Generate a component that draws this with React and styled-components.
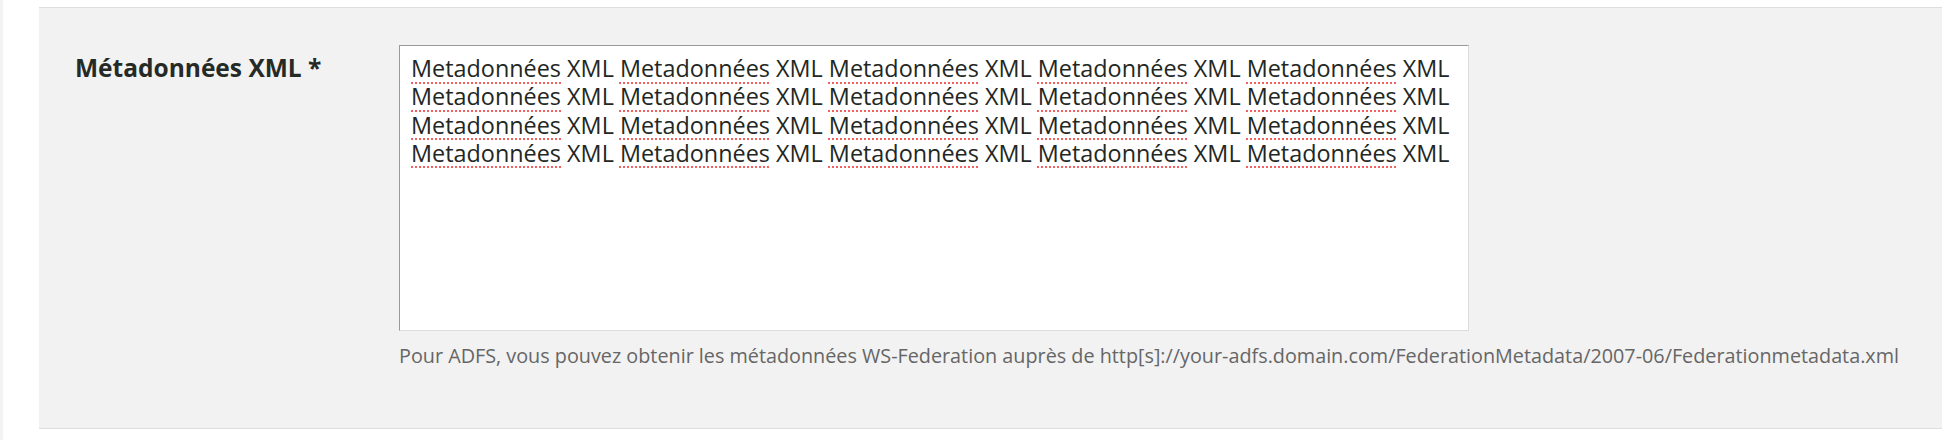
import React from "react";
import styled, { createGlobalStyle } from "styled-components";

const Global = createGlobalStyle`
  html, body { margin: 0; padding: 0; background: #ffffff; }
  body { font-family: "Open Sans", "Noto Sans", sans-serif; }
`;

const Page = styled.div`
  display: flex;
  height: 440px;
  box-sizing: border-box;
  border-left: 3px solid #f3f3f3;
  padding: 7px 0 0 36px;
`;

const Panel = styled.section`
  flex: 1;
  align-self: flex-start;
  box-sizing: border-box;
  height: 422px;
  background: #f2f2f2;
  border-top: 1px solid #dedede;
  border-bottom: 1px solid #dedede;
  padding: 37px 0 0 36px;
  display: grid;
  grid-template-columns: 324px 1fr;
  align-items: start;
`;

const Label = styled.label`
  font-size: 24.5px;
  font-weight: 700;
  line-height: 28px;
  color: #262a27;
  margin-top: 9px;
`;

const Field = styled.div`
  display: flex;
  flex-direction: column;
  align-items: flex-start;
`;

const TextBox = styled.div`
  width: 1070px;
  height: 286px;
  box-sizing: border-box;
  background: #ffffff;
  border-style: solid;
  border-width: 1px;
  border-color: #9a9a9a #dcdcdc #dcdcdc #9a9a9a;
  padding: 8px 11px 6px;
  font-size: 23.4px;
  line-height: 28.3px;
  color: #232723;
  overflow: hidden;
`;

const Misspelled = styled.span`
  text-decoration: underline dotted #f26060;
  text-decoration-thickness: 2px;
  text-underline-offset: 5px;
`;

const Help = styled.p`
  margin: 11px 0 0;
  font-size: 19.8px;
  line-height: 28px;
  color: #666666;
  white-space: nowrap;
`;

const Line = styled.div``;

export default function App() {
  const lines = [0, 1, 2, 3];
  const words = [0, 1, 2, 3, 4];
  return (
    <>
      <Global />
      <Page>
        <Panel>
          <Label htmlFor="xml">Métadonnées XML *</Label>
          <Field>
            <TextBox id="xml" role="textbox" aria-multiline="true">
              {lines.map((l) => (
                <Line key={l}>
                  {words.map((w) => (
                    <React.Fragment key={w}>
                      <Misspelled>Metadonnées</Misspelled> XML{w < 4 ? " " : ""}
                    </React.Fragment>
                  ))}
                </Line>
              ))}
            </TextBox>
            <Help>
              Pour ADFS, vous pouvez obtenir les métadonnées WS-Federation auprès de
              http[s]://your-adfs.domain.com/FederationMetadata/2007-06/Federationmetadata.xml
            </Help>
          </Field>
        </Panel>
      </Page>
    </>
  );
}
